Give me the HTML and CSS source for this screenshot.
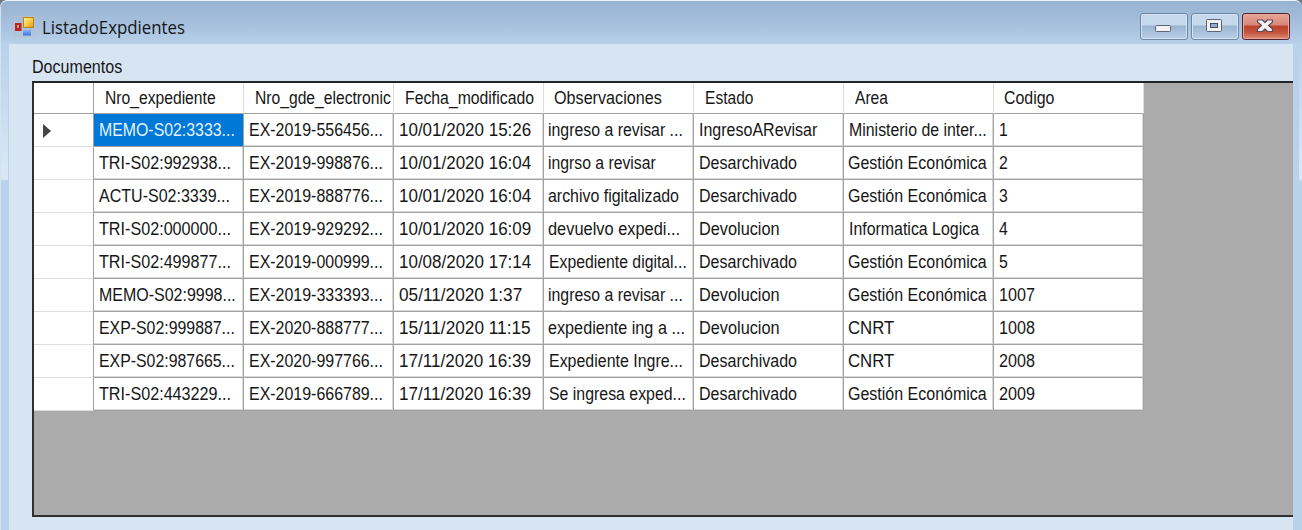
FILE: index.html
```html
<!DOCTYPE html>
<html lang="es">
<head>
<meta charset="utf-8">
<title>ListadoExpdientes</title>
<link rel="stylesheet" href="styles.css">
</head>
<body>
<div class="window">
  <header class="titlebar">
    <svg class="app-icon" width="21" height="21" viewBox="0 0 21 21">
      <defs>
        <linearGradient id="gold" x2="1" y2="1"><stop stop-color="#fff0a0"/><stop offset=".5" stop-color="#f8cc48"/><stop offset="1" stop-color="#d99b10"/></linearGradient>
        <linearGradient id="blue" x2="0" y2="1"><stop stop-color="#8db4f4"/><stop offset="1" stop-color="#3d74d8"/></linearGradient>
      </defs>
      <path d="M.5 .5h19.500v19.500H.5z" fill="none" stroke="#bcc0c6"/>
      <rect x="1" y="7" width="6.500" height="8" fill="#b9251c"/>
      <rect x="3" y="9" width="2" height="3" fill="#e88c80"/>
      <rect x="9.500" y="1.500" width="10" height="10" fill="url(#gold)" stroke="#b98318"/>
      <rect x="9" y="14" width="8" height="5.500" fill="url(#blue)"/>
    </svg>
    <h1 class="title"><span class="fit" data-w="143">ListadoExpdientes</span></h1>
    <div class="controls">
      <button class="control" aria-label="Minimizar">
        <svg width="48" height="27"><rect x="15.500" y="12.500" width="15" height="6" rx="1" fill="#f1f1f1" stroke="#5c6478"/></svg>
      </button>
      <button class="control" aria-label="Maximizar">
        <svg width="48" height="27"><rect x="15.500" y="6.500" width="15" height="12" rx="1" fill="#f1f1f1" stroke="#5c6478"/><rect x="19.500" y="10.500" width="7" height="4" fill="#93abc9" stroke="#454d63"/></svg>
      </button>
      <button class="control close" aria-label="Cerrar">
        <svg width="48" height="27"><path d="M15.500 7h5l2.500 2.500 2.500-2.500h5v2l-4 3.500 4 3.500v2.500h-5l-2.500-2.700-2.500 2.700h-5v-2.500l4-3.500-4-3.500z" fill="#f4f2f2" stroke="#564b5e" stroke-width="1.200" stroke-linejoin="round"/></svg>
      </button>
    </div>
  </header>
  <main class="client">
    <div class="caption"><span class="fit" data-w="90">Documentos</span></div>
    <div class="grid-frame"><div class="grid" id="grid"></div></div>
  </main>
</div>
<script src="app.js"></script>
</body>
</html>
```
FILE: styles.css
```css
* { box-sizing: border-box; }
body {
  margin: 0;
  overflow: hidden;
  background: #6c7882;
  font-family: "Liberation Sans", Arial, sans-serif;
  font-size: 17.5px;
  color: #161616;
}
.window {
  height: 530px;
  padding: 0 9px 0 8px;
  border-top: 1px solid #eef4fa;
  border-left: 1px solid #d2e2f2;
  border-radius: 7px 7px 0 0;
  background:
    linear-gradient(#b9d1ea00 45px, #dce8f4 178px, #b9d1ea 180px) 0 0 / 7px 100% no-repeat,
    linear-gradient(#b9d1ea00 45px, #dce8f4 178px, #b9d1ea 180px) 100% 0 / 3px 100% no-repeat,
    linear-gradient(#98b3d1, #a7c1de 25px, #b9d1ea 44px, #b9d1ea);
}
.titlebar {
  display: flex;
  height: 43px;
  align-items: flex-start;
}
.app-icon { flex: none; margin: 15px 7px 0 5px; }
.title {
  flex: 1;
  margin: 14px 0 0;
  font-family: "Open Sans", "Noto Sans", sans-serif;
  font-size: 18px;
  font-weight: 400;
  line-height: 25px;
}
.controls { display: flex; gap: 3px; padding: 12px 3px 0 0; }
.control {
  width: 48px;
  height: 27px;
  padding: 0;
  overflow: hidden;
  border: 1px solid #6d86a5;
  border-radius: 3px;
  background: linear-gradient(#c6d8ec 0 11px, #9bb5d1 12px, #bbd1e8 26px);
  box-shadow: inset 0 0 0 1px #d5e3f2;
}
.control svg { display: block; margin: -1px; }
.close {
  border-color: #57202d;
  background: linear-gradient(#e5a596, #d9887a 11px, #ba432a 12px, #c4513a 18px, #df9580 26px);
  box-shadow: inset 0 0 0 1px #e8aa9e;
}
.client {
  height: 486px;
  padding-left: 23px;
  background: #d7e4f2;
}
.caption { height: 37px; padding-top: 12px; line-height: 22px; }
.grid-frame {
  height: 436px;
  border: 2px solid #303030;
  border-top-color: #202525;
  border-right: 0;
  background: #ababab;
}
.grid {
  display: grid;
  width: 1110px;
  grid-template-columns: 60px repeat(7, 150px);
  grid-template-rows: 31px repeat(9, 33px);
}
.cell {
  min-width: 0;
  overflow: hidden;
  padding-left: 5px;
  border-right: 1px solid #a3a3a3;
  border-bottom: 1px solid #a0a0a0;
  box-shadow: inset -1px -1px #d9d9d9;
  background: #fff;
  line-height: 32px;
  white-space: nowrap;
}
.cell.head {
  padding-left: 11px;
  border-right-color: #dedede;
  box-shadow: none;
  line-height: 30px;
}
.cell.row-head {
  padding: 10px 0 0 9px;
  border-right-color: #a0a0a0;
  border-bottom-color: #dedede;
  box-shadow: none;
  line-height: 0;
}
.cell.corner { border-right-color: #a0a0a0; }
.cell.selected { background: #0078d7; color: #e5f2fc; box-shadow: none; }
.fit { display: inline-block; transform-origin: 0 50%; white-space: nowrap; }
```
FILE: app.js
```js
// Each entry is [text, drawn width, optional indent adjustment].
const heads = [["Nro_expediente", 111], ["Nro_gde_electronic", 136], ["Fecha_modificado", 129], ["Observaciones", 108, -1], ["Estado", 48], ["Area", 33], ["Codigo", 50, -1]];
const eco = ["Gestión Económica", 139, -1];
const des = ["Desarchivado", 98];
const dev = ["Devolucion", 81];
const cnrt = ["CNRT", 46, -1];
const date = text => [text, 132];
const gde = text => [text, 134];
const rows = [
  [["MEMO-S02:3333...", 136], gde("EX-2019-556456..."), date("10/01/2020 15:26"), ["ingreso a revisar ...", 135, -1], ["IngresoARevisar", 118], ["Ministerio de inter...", 138], ["1", 9]],
  [["TRI-S02:992938...", 132], gde("EX-2019-998876..."), date("10/01/2020 16:04"), ["ingrso a revisar", 108, -1], des, eco, ["2", 9]],
  [["ACTU-S02:3339...", 131], gde("EX-2019-888776..."), date("10/01/2020 16:04"), ["archivo figitalizado", 131, -1], des, eco, ["3", 9]],
  [["TRI-S02:000000...", 132], gde("EX-2019-929292..."), date("10/01/2020 16:09"), ["devuelvo expedi...", 132, -1], dev, ["Informatica Logica", 130], ["4", 9]],
  [["TRI-S02:499877...", 132], gde("EX-2019-000999..."), date("10/08/2020 17:14"), ["Expediente digital...", 138], des, eco, ["5", 9]],
  [["MEMO-S02:9998...", 137], gde("EX-2019-333393..."), ["05/11/2020 1:37", 123], ["ingreso a revisar ...", 135, -1], dev, eco, ["1007", 36]],
  [["EXP-S02:999887...", 136], gde("EX-2020-888777..."), date("15/11/2020 11:15"), ["expediente ing a ...", 137, -1], dev, cnrt, ["1008", 36]],
  [["EXP-S02:987665...", 136], gde("EX-2020-997766..."), date("17/11/2020 16:39"), ["Expediente Ingre...", 134], des, cnrt, ["2008", 36]],
  [["TRI-S02:443229...", 132], gde("EX-2019-666789..."), date("17/11/2020 16:39"), ["Se ingresa exped...", 137], des, eco, ["2009", 36]]
];
const grid = document.getElementById("grid");
function addCell(classes, item) {
  const cell = document.createElement("div");
  cell.className = "cell " + classes;
  if (item) {
    const label = document.createElement("span");
    label.className = "fit";
    label.textContent = item[0];
    label.dataset.w = item[1];
    if (item[2]) label.style.marginLeft = item[2] + "px";
    cell.append(label);
  }
  grid.append(cell);
  return cell;
}
addCell("head corner");
heads.forEach(item => addCell("head", item));
rows.forEach((row, i) => {
  const marker = addCell("row-head");
  if (i === 0) marker.innerHTML = '<svg width="9" height="14"><path d="M0 0l8 7-8 7z" fill="#444"/></svg>';
  row.forEach((item, j) => addCell(i === 0 && j === 0 ? "selected" : "", item));
});
document.querySelectorAll(".fit").forEach(label => {
  label.style.transform = "scaleX(" + label.dataset.w / label.offsetWidth + ")";
});
```
